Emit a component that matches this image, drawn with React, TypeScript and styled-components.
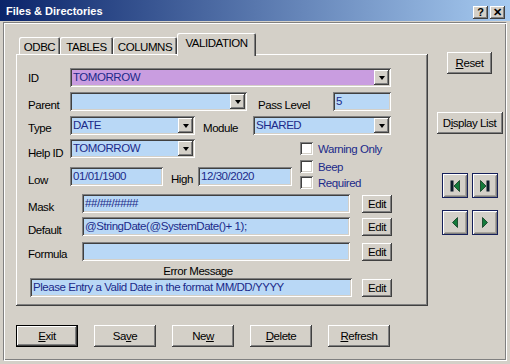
import React from "react";
import styled, { createGlobalStyle, css } from "styled-components";

const face = "#D4D0C8";
const fieldBlue = "#B9D8F6";
const fieldPurple = "#C99DE0";
const inkBlue = "#1B2A8A";

const raised = css`
  box-shadow: inset -1px -1px #404040, inset 1px 1px #ffffff,
    inset -2px -2px #808080, inset 2px 2px ${face};
`;

const sunken = css`
  box-shadow: inset 1px 1px #808080, inset -1px -1px #ffffff,
    inset 2px 2px #404040, inset -2px -2px ${face};
`;

const GlobalStyle = createGlobalStyle`
  html, body {
    margin: 0;
    padding: 0;
    background: ${face};
  }
  body {
    font-family: "Liberation Sans", Arial, sans-serif;
    font-size: 11.5px;
    letter-spacing: -0.45px;
    color: #000;
  }
`;

const Window = styled.div`
  width: 510px;
  height: 364px;
  display: flex;
  flex-direction: column;
  overflow: hidden;
  background: ${face};
`;

// Title bar
const TitleBar = styled.div`
  height: 21px;
  display: flex;
  align-items: center;
  padding: 0 5px 0 6px;
  background: linear-gradient(to right, #0a246a, #a6caf0);
  color: #fff;
`;

const TitleText = styled.div`
  flex: 1;
  font-weight: bold;
  font-size: 11px;
  letter-spacing: 0;
  padding-top: 1px;
`;

const CaptionButton = styled.div`
  width: 15px;
  height: 13px;
  margin-left: 2px;
  margin-top: 3px;
  background: ${face};
  ${raised};
  color: #000;
  font-weight: bold;
  font-size: 11px;
  letter-spacing: 0;
  line-height: 13px;
  text-align: center;
`;

const Frame = styled.div`
  flex: 1;
  margin: 1px 3px 3px 3px;
  border-top: 1px solid #808080;
  border-left: 1px solid #808080;
  border-right: 1px solid #ffffff;
  border-bottom: 1px solid #ffffff;
  box-shadow: inset 1px 1px #ffffff, inset -1px -1px #808080;
  padding: 10px 0 0 12px;
  display: flex;
  flex-direction: column;
`;

const MainRow = styled.div`
  display: flex;
`;

const LeftCol = styled.div`
  width: 412px;
  display: flex;
  flex-direction: column;
`;

// Tabs
const TabStrip = styled.div`
  height: 21px;
  display: flex;
  align-items: flex-end;
  padding-left: 3px;
`;

const Tab = styled.div<{ $w: number; $active?: boolean }>`
  width: ${(p) => p.$w}px;
  height: ${(p) => (p.$active ? 23 : 17)}px;
  margin-bottom: ${(p) => (p.$active ? -2 : 0)}px;
  position: relative;
  z-index: ${(p) => (p.$active ? 2 : 0)};
  background: ${face};
  border-radius: 2px 2px 0 0;
  box-shadow: inset 1px 1px #ffffff, inset -1px 0 #404040, inset -2px 0 #808080;
  display: flex;
  justify-content: center;
  padding-top: ${(p) => (p.$active ? 4 : 4)}px;
  box-sizing: border-box;
  line-height: 12px;
`;

const Panel = styled.div`
  height: 252px;
  box-sizing: border-box;
  background: ${face};
  ${raised};
  padding: 14px 0 0 12px;
  position: relative;
  z-index: 1;
`;

// Form rows
const FormRow = styled.div<{ $mt?: number }>`
  display: flex;
  align-items: center;
  height: 19px;
  margin-top: ${(p) => p.$mt ?? 0}px;
`;

const Label = styled.span<{ $w: number; $ml?: number; $dy?: number }>`
  width: ${(p) => p.$w}px;
  margin-left: ${(p) => p.$ml ?? 0}px;
  flex-shrink: 0;
  line-height: 13px;
  padding-top: ${(p) => p.$dy ?? 7}px;
  white-space: nowrap;
`;

const Field = styled.div<{ $w: number; $ml?: number; $purple?: boolean }>`
  width: ${(p) => p.$w}px;
  height: 19px;
  margin-left: ${(p) => p.$ml ?? 0}px;
  flex-shrink: 0;
  box-sizing: border-box;
  background: ${(p) => (p.$purple ? fieldPurple : fieldBlue)};
  ${sunken};
  color: ${inkBlue};
  display: flex;
  align-items: center;
  padding: 0 2px 1px 3px;
  white-space: nowrap;
  overflow: hidden;
`;

const FieldText = styled.span`
  flex: 1;
  overflow: hidden;
`;

const DropButton = styled.div`
  width: 15px;
  height: 15px;
  margin-top: 1px;
  flex-shrink: 0;
  background: ${face};
  ${raised};
  display: flex;
  align-items: center;
  justify-content: center;
`;

const DownArrow = styled.div`
  width: 0;
  height: 0;
  border-left: 3.5px solid transparent;
  border-right: 3.5px solid transparent;
  border-top: 4px solid #000;
`;

const SplitBlock = styled.div`
  display: flex;
  margin-top: 4px;
`;

const StackCol = styled.div`
  display: flex;
  flex-direction: column;
`;

const CheckCol = styled.div`
  display: flex;
  flex-direction: column;
  margin-left: 8px;
  padding-top: 3px;
`;

const CheckRow = styled.div<{ $mt?: number }>`
  display: flex;
  align-items: center;
  height: 13px;
  margin-top: ${(p) => p.$mt ?? 0}px;
  color: ${inkBlue};
`;

const CheckBox = styled.div`
  width: 13px;
  height: 13px;
  flex-shrink: 0;
  background: #fff;
  ${sunken};
  margin-right: 5px;
`;

const Button = styled.div<{ $w: number; $h?: number; $ml?: number; $default?: boolean }>`
  width: ${(p) => p.$w}px;
  height: ${(p) => p.$h ?? 22}px;
  margin-left: ${(p) => p.$ml ?? 0}px;
  flex-shrink: 0;
  box-sizing: border-box;
  background: ${face};
  ${raised};
  ${(p) =>
    p.$default &&
    css`
      border: 1px solid #000;
    `}
  display: flex;
  align-items: center;
  justify-content: center;
  white-space: nowrap;
`;

const Caption = styled.div`
  width: 336px;
  margin: 4px 0 0 2px;
  height: 12px;
  line-height: 12px;
  text-align: center;
`;

// Right column
const RightCol = styled.div`
  width: 78px;
  padding-left: 5px;
  box-sizing: border-box;
  display: flex;
  flex-direction: column;
  align-items: center;
`;

const NavGrid = styled.div`
  margin-top: 39px;
  display: grid;
  grid-template-columns: 26px 26px;
  column-gap: 4px;
  row-gap: 12px;
`;

const NavButton = styled.div`
  width: 26px;
  height: 25px;
  box-sizing: border-box;
  border: 1px solid #16205a;
  background: ${face};
  box-shadow: inset 1px 1px #ffffff, inset -1px -1px #808080,
    inset 2px 2px ${face}, inset -2px -2px #a8a49c;
  display: flex;
  align-items: center;
  justify-content: center;
`;

const BottomRow = styled.div`
  display: flex;
  gap: 16px;
  margin-top: 19px;
`;

type NavKind = "first" | "last" | "prev" | "next";

const NavGlyph = ({ kind }: { kind: NavKind }) => {
  const green = "#137a3a";
  if (kind === "first")
    return (
      <svg width="10" height="12" viewBox="0 0 10 12">
        <rect x="0.5" y="0.5" width="3" height="11" fill="#0b1a2a" />
        <polygon points="9.5,0.5 4,6 9.5,11.5" fill={green} stroke="#0b3a1e" strokeWidth="0.8" />
      </svg>
    );
  if (kind === "last")
    return (
      <svg width="10" height="12" viewBox="0 0 10 12">
        <polygon points="0.5,0.5 6,6 0.5,11.5" fill={green} stroke="#0b3a1e" strokeWidth="0.8" />
        <rect x="6.5" y="0.5" width="3" height="11" fill="#0b1a2a" />
      </svg>
    );
  if (kind === "prev")
    return (
      <svg width="6" height="11" viewBox="0 0 6 11">
        <polygon points="5.5,0.5 0.5,5.5 5.5,10.5" fill={green} stroke="#0b3a1e" strokeWidth="0.8" />
      </svg>
    );
  return (
    <svg width="6" height="11" viewBox="0 0 6 11">
      <polygon points="0.5,0.5 5.5,5.5 0.5,10.5" fill={green} stroke="#0b3a1e" strokeWidth="0.8" />
    </svg>
  );
};

const Combo = ({ w, text, purple, ml }: { w: number; text?: string; purple?: boolean; ml?: number }) => (
  <Field $w={w} $purple={purple} $ml={ml}>
    <FieldText>{text}</FieldText>
    <DropButton>
      <DownArrow />
    </DropButton>
  </Field>
);

const App: React.FC = () => {
  return (
    <>
      <GlobalStyle />
      <Window>
        <TitleBar>
          <TitleText>Files &amp; Directories</TitleText>
          <CaptionButton>?</CaptionButton>
          <CaptionButton>✕</CaptionButton>
        </TitleBar>
        <Frame>
          <MainRow>
            <LeftCol>
              <TabStrip>
                <Tab $w={41}>ODBC</Tab>
                <Tab $w={53}>TABLES</Tab>
                <Tab $w={64}>COLUMNS</Tab>
                <Tab $w={79} $active>
                  VALIDATION
                </Tab>
              </TabStrip>
              <Panel>
                <FormRow>
                  <Label $w={42} $dy={1}>
                    ID
                  </Label>
                  <Combo w={321} text="TOMORROW" purple />
                </FormRow>
                <FormRow $mt={5}>
                  <Label $w={42}>Parent</Label>
                  <Combo w={177} />
                  <Label $w={75} $ml={11}>
                    Pass Level
                  </Label>
                  <Field $w={58}>5</Field>
                </FormRow>
                <FormRow $mt={5}>
                  <Label $w={42} $dy={5}>
                    Type
                  </Label>
                  <Combo w={125} text="DATE" />
                  <Label $w={50} $ml={8} $dy={5}>
                    Module
                  </Label>
                  <Combo w={138} text="SHARED" />
                </FormRow>
                <SplitBlock>
                  <StackCol>
                    <FormRow>
                      <Label $w={42} $dy={9}>
                        Help ID
                      </Label>
                      <Combo w={125} text="TOMORROW" />
                    </FormRow>
                    <FormRow $mt={9}>
                      <Label $w={42}>Low</Label>
                      <Field $w={93}>01/01/1900</Field>
                      <Label $w={27} $ml={8} $dy={6}>
                        High
                      </Label>
                      <Field $w={94}>12/30/2020</Field>
                    </FormRow>
                  </StackCol>
                  <CheckCol>
                    <CheckRow>
                      <CheckBox />
                      Warning Only
                    </CheckRow>
                    <CheckRow $mt={5}>
                      <CheckBox />
                      Beep
                    </CheckRow>
                    <CheckRow $mt={3}>
                      <CheckBox />
                      Required
                    </CheckRow>
                  </CheckCol>
                </SplitBlock>
                <FormRow $mt={5}>
                  <Label $w={54} $dy={8}>
                    Mask
                  </Label>
                  <Field $w={268}>##/##/####</Field>
                  <Button $w={30} $h={18} $ml={12}>
                    Edit
                  </Button>
                </FormRow>
                <FormRow $mt={4}>
                  <Label $w={54} $dy={8}>
                    Default
                  </Label>
                  <Field $w={268}>@StringDate(@SystemDate()+ 1);</Field>
                  <Button $w={30} $h={18} $ml={12}>
                    Edit
                  </Button>
                </FormRow>
                <FormRow $mt={6}>
                  <Label $w={54} $dy={6}>
                    Formula
                  </Label>
                  <Field $w={268} />
                  <Button $w={30} $h={18} $ml={12}>
                    Edit
                  </Button>
                </FormRow>
                <Caption>Error Message</Caption>
                <FormRow $mt={1}>
                  <Field $w={322} $ml={2}>
                    Please Entry a Valid Date in the format MM/DD/YYYY
                  </Field>
                  <Button $w={30} $h={18} $ml={10}>
                    Edit
                  </Button>
                </FormRow>
              </Panel>
            </LeftCol>
            <RightCol>
              <Button $w={45} style={{ marginTop: 19 }}>
                <u>R</u>eset
              </Button>
              <Button $w={66} style={{ marginTop: 38 }}>
                D<u>i</u>splay List
              </Button>
              <NavGrid>
                <NavButton>
                  <NavGlyph kind="first" />
                </NavButton>
                <NavButton>
                  <NavGlyph kind="last" />
                </NavButton>
                <NavButton>
                  <NavGlyph kind="prev" />
                </NavButton>
                <NavButton>
                  <NavGlyph kind="next" />
                </NavButton>
              </NavGrid>
            </RightCol>
          </MainRow>
          <BottomRow>
            <Button $w={62} $default>
              <u>E</u>xit
            </Button>
            <Button $w={62}>
              Sa<u>v</u>e
            </Button>
            <Button $w={62}>
              Ne<u>w</u>
            </Button>
            <Button $w={62}>
              <u>D</u>elete
            </Button>
            <Button $w={62}>
              <u>R</u>efresh
            </Button>
          </BottomRow>
        </Frame>
      </Window>
    </>
  );
};

export default App;
